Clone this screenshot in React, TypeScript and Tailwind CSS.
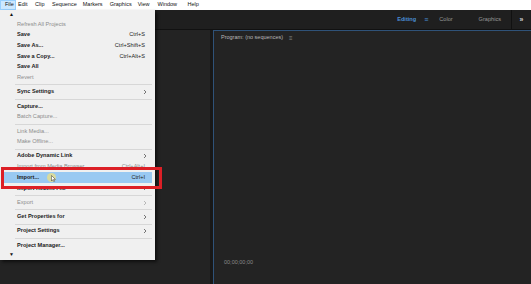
import React from 'react'

type Item =
  | { kind: 'sep' }
  | { kind: 'item'; label: string; shortcut?: string; sub?: boolean; disabled?: boolean; active?: boolean }

const items: Item[] = [
  { kind: 'item', label: 'Refresh All Projects', disabled: true },
  { kind: 'item', label: 'Save', shortcut: 'Ctrl+S' },
  { kind: 'item', label: 'Save As...', shortcut: 'Ctrl+Shift+S' },
  { kind: 'item', label: 'Save a Copy...', shortcut: 'Ctrl+Alt+S' },
  { kind: 'item', label: 'Save All' },
  { kind: 'item', label: 'Revert', disabled: true },
  { kind: 'sep' },
  { kind: 'item', label: 'Sync Settings', sub: true },
  { kind: 'sep' },
  { kind: 'item', label: 'Capture...' },
  { kind: 'item', label: 'Batch Capture...', disabled: true },
  { kind: 'sep' },
  { kind: 'item', label: 'Link Media...', disabled: true },
  { kind: 'item', label: 'Make Offline...', disabled: true },
  { kind: 'sep' },
  { kind: 'item', label: 'Adobe Dynamic Link', sub: true },
  { kind: 'item', label: 'Import from Media Browser', shortcut: 'Ctrl+Alt+I', disabled: true },
  { kind: 'item', label: 'Import...', shortcut: 'Ctrl+I', active: true },
  { kind: 'item', label: 'Import Recent File', sub: true },
  { kind: 'sep' },
  { kind: 'item', label: 'Export', sub: true, disabled: true },
  { kind: 'sep' },
  { kind: 'item', label: 'Get Properties for', sub: true },
  { kind: 'sep' },
  { kind: 'item', label: 'Project Settings', sub: true },
  { kind: 'sep' },
  { kind: 'item', label: 'Project Manager...' },
]

const menus: [string, string][] = [
  ['File', 'pl-[4px] w-[16px] bg-[#cce8ff] border border-[#99d1ff]'],
  ['Edit', 'ml-[2px]'],
  ['Clip', 'ml-[7.5px]'],
  ['Sequence', 'ml-[7.5px]'],
  ['Markers', 'ml-[6px]'],
  ['Graphics', 'ml-[7px]'],
  ['View', 'ml-[6px]'],
  ['Window', 'ml-[8px]'],
  ['Help', 'ml-[10.5px]'],
]

function Chevron({ color }: { color: string }) {
  return (
    <svg width="4" height="6" viewBox="0 0 4 6" className="ml-[2px]">
      <path d="M1 1 L3 3 L1 5" fill="none" stroke={color} strokeWidth="0.8" />
    </svg>
  )
}

function FileMenu() {
  return (
    <div className="absolute left-0 top-[10px] w-[155px] bg-[#f0f0f0] shadow-[2px_2px_3px_rgba(0,0,0,0.6)] pb-[2px]">
      <div className="h-[9px] flex items-center pl-[9px] text-[5px] leading-none text-[#111]">▲</div>
      {items.map((it, i) =>
        it.kind === 'sep' ? (
          <div key={i} className="h-[3.6px] flex items-center pl-[15px] pr-[3px]">
            <div className="h-px w-full bg-[#d7d7d7]" />
          </div>
        ) : (
          <div
            key={i}
            className={`h-[10.7px] mx-[3px] flex items-center pl-[14px] pr-[5px] text-[5.6px] leading-none ${
              it.active ? 'bg-[#99c9f2]' : ''
            } ${it.disabled ? 'text-[#8c8c8c]' : 'text-[#1b1b1b] font-semibold'}`}
          >
            <span className="flex-1">{it.label}</span>
            {it.shortcut && <span className={it.disabled ? 'mr-[2px]' : 'font-medium mr-[2px]'}>{it.shortcut}</span>}
            {it.sub && <Chevron color={it.disabled ? '#aaa' : '#555'} />}
          </div>
        )
      )}
      <div className="h-[7px] flex items-center pl-[9px] text-[5px] leading-none text-[#111]">▼</div>
    </div>
  )
}

export default function App() {
  return (
    <div
      className="relative w-[531px] h-[284px] overflow-hidden bg-[#232323] flex flex-col"
      style={{ fontFamily: '"Liberation Sans", Arial, sans-serif' }}
    >
      {/* menu bar */}
      <div className="h-[10px] bg-white flex items-center text-[5.5px] leading-none text-[#111]">
        {menus.map(([m, cls]) => (
          <div key={m} className={`h-full flex items-center ${cls}`}>
            {m}
          </div>
        ))}
      </div>

      {/* workspace bar */}
      <div className="h-[20px] bg-[#1f1f1f] border-b border-[#111] flex items-center text-[5.6px] leading-none">
        <div className="flex-1" />
        <span className="text-[#4b8fd6] font-semibold">Editing</span>
        <span className="text-[#4b8fd6] ml-[8px] text-[7px]">≡</span>
        <span className="text-[#9a9a9a] ml-[11px]">Color</span>
        <span className="text-[#9a9a9a] ml-[26px]">Graphics</span>
        <div className="ml-[10px] h-full w-px bg-[#111]" />
        <span className="text-[#cfcfcf] font-bold w-[19px] text-center text-[7px]">»</span>
      </div>

      {/* panels */}
      <div className="flex-1 flex gap-[3px] bg-[#181818]">
        <div className="w-[210px] bg-[#232323]" />
        <div className="flex-1 bg-[#232323] border-t border-l border-[#2f5278] flex flex-col">
          <div className="h-[13px] flex items-center pl-[7px] text-[5.5px] text-[#b8b8b8] leading-none">
            Program: (no sequences)
            <span className="ml-[6px] text-[#8a8a8a] text-[6px]">≡</span>
          </div>
          <div className="flex-1" />
          <div className="h-[24px] pl-[10px] text-[5.5px] text-[#8a8a8a] leading-none">00;00;00;00</div>
        </div>
      </div>

      <FileMenu />

      {/* highlight box */}
      <div className="absolute left-[1px] top-[167px] w-[161px] h-[22px] border-[3px] border-[#dc1f26]" />
      {/* cursor */}
      <div className="absolute left-[47px] top-[173px] w-[9px] h-[9px] rounded-full bg-[#f2e27a]/70" />
      <svg className="absolute left-[51px] top-[175px]" width="5" height="7" viewBox="0 0 5 7">
        <path d="M0.5 0.5 L0.5 6 L1.8 4.7 L2.8 6.6 L3.6 6.2 L2.6 4.4 L4.4 4.4 Z" fill="#fff" stroke="#333" strokeWidth="0.5" />
      </svg>
    </div>
  )
}
